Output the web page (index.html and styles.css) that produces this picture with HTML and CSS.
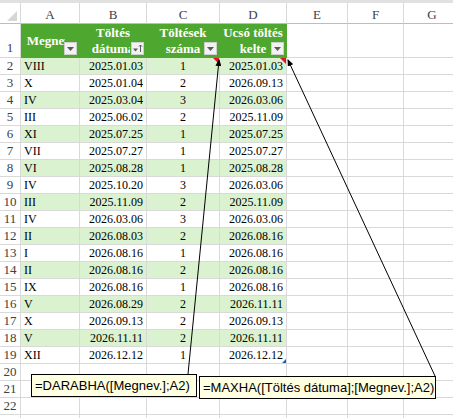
FILE: index.html
```html
<!DOCTYPE html>
<html lang="hu">
<head>
<meta charset="utf-8">
<title>Töltések</title>
<link rel="stylesheet" href="styles.css">
</head>
<body>
<div class="topbar"></div>
<div class="sheet">
  <div class="row hdr">
    <div class="c corner"><span class="tri"></span></div>
    <div class="c ch">A</div><div class="c ch">B</div><div class="c ch">C</div><div class="c ch">D</div><div class="c ch">E</div><div class="c ch">F</div><div class="c ch">G</div>
  </div>
  <div class="row r1">
    <div class="c rh bottom">1</div>
    <div class="c th"><div class="lbl clipA">Megnev.</div><span class="fbtn"><svg width="11" height="11" viewBox="0 0 11 11"><path d="M2 4h7l-3.5 4z" fill="#5a5a5a"/></svg></span></div>
    <div class="c th"><div class="lbl clipB">Töltés<br>dátuma</div><span class="fbtn"><svg width="11" height="11" viewBox="0 0 11 11"><path d="M1 5.5h5l-2.5 3z" fill="#5a5a5a"/><path d="M8.5 2v7M7 3.5l1.5-1.5 1.5 1.5" stroke="#5a5a5a" stroke-width="1" fill="none"/></svg></span></div>
    <div class="c th"><div class="lbl">Töltések<br>száma</div><span class="fbtn"><svg width="11" height="11" viewBox="0 0 11 11"><path d="M2 4h7l-3.5 4z" fill="#5a5a5a"/></svg></span></div>
    <div class="c th"><div class="lbl">Ucsó töltés<br>kelte</div><span class="fbtn"><svg width="11" height="11" viewBox="0 0 11 11"><path d="M2 4h7l-3.5 4z" fill="#5a5a5a"/></svg></span></div>
    <div class="c"></div><div class="c"></div><div class="c"></div>
  </div>
  <div class="row g"><div class="c rh">2</div><div class="c a">VIII</div><div class="c b">2025.01.03</div><div class="c m note-mark">1</div><div class="c b note-mark">2025.01.03</div><div class="c"></div><div class="c"></div><div class="c"></div></div>
  <div class="row"><div class="c rh">3</div><div class="c a">X</div><div class="c b">2025.01.04</div><div class="c m">2</div><div class="c b">2026.09.13</div><div class="c"></div><div class="c"></div><div class="c"></div></div>
  <div class="row g"><div class="c rh">4</div><div class="c a">IV</div><div class="c b">2025.03.04</div><div class="c m">3</div><div class="c b">2026.03.06</div><div class="c"></div><div class="c"></div><div class="c"></div></div>
  <div class="row"><div class="c rh">5</div><div class="c a">III</div><div class="c b">2025.06.02</div><div class="c m">2</div><div class="c b">2025.11.09</div><div class="c"></div><div class="c"></div><div class="c"></div></div>
  <div class="row g"><div class="c rh">6</div><div class="c a">XI</div><div class="c b">2025.07.25</div><div class="c m">1</div><div class="c b">2025.07.25</div><div class="c"></div><div class="c"></div><div class="c"></div></div>
  <div class="row"><div class="c rh">7</div><div class="c a">VII</div><div class="c b">2025.07.27</div><div class="c m">1</div><div class="c b">2025.07.27</div><div class="c"></div><div class="c"></div><div class="c"></div></div>
  <div class="row g"><div class="c rh">8</div><div class="c a">VI</div><div class="c b">2025.08.28</div><div class="c m">1</div><div class="c b">2025.08.28</div><div class="c"></div><div class="c"></div><div class="c"></div></div>
  <div class="row"><div class="c rh">9</div><div class="c a">IV</div><div class="c b">2025.10.20</div><div class="c m">3</div><div class="c b">2026.03.06</div><div class="c"></div><div class="c"></div><div class="c"></div></div>
  <div class="row g"><div class="c rh">10</div><div class="c a">III</div><div class="c b">2025.11.09</div><div class="c m">2</div><div class="c b">2025.11.09</div><div class="c"></div><div class="c"></div><div class="c"></div></div>
  <div class="row"><div class="c rh">11</div><div class="c a">IV</div><div class="c b">2026.03.06</div><div class="c m">3</div><div class="c b">2026.03.06</div><div class="c"></div><div class="c"></div><div class="c"></div></div>
  <div class="row g"><div class="c rh">12</div><div class="c a">II</div><div class="c b">2026.08.03</div><div class="c m">2</div><div class="c b">2026.08.16</div><div class="c"></div><div class="c"></div><div class="c"></div></div>
  <div class="row"><div class="c rh">13</div><div class="c a">I</div><div class="c b">2026.08.16</div><div class="c m">1</div><div class="c b">2026.08.16</div><div class="c"></div><div class="c"></div><div class="c"></div></div>
  <div class="row g"><div class="c rh">14</div><div class="c a">II</div><div class="c b">2026.08.16</div><div class="c m">2</div><div class="c b">2026.08.16</div><div class="c"></div><div class="c"></div><div class="c"></div></div>
  <div class="row"><div class="c rh">15</div><div class="c a">IX</div><div class="c b">2026.08.16</div><div class="c m">1</div><div class="c b">2026.08.16</div><div class="c"></div><div class="c"></div><div class="c"></div></div>
  <div class="row g"><div class="c rh">16</div><div class="c a">V</div><div class="c b">2026.08.29</div><div class="c m">2</div><div class="c b">2026.11.11</div><div class="c"></div><div class="c"></div><div class="c"></div></div>
  <div class="row"><div class="c rh">17</div><div class="c a">X</div><div class="c b">2026.09.13</div><div class="c m">2</div><div class="c b">2026.09.13</div><div class="c"></div><div class="c"></div><div class="c"></div></div>
  <div class="row g"><div class="c rh">18</div><div class="c a">V</div><div class="c b">2026.11.11</div><div class="c m">2</div><div class="c b">2026.11.11</div><div class="c"></div><div class="c"></div><div class="c"></div></div>
  <div class="row"><div class="c rh">19</div><div class="c a">XII</div><div class="c b">2026.12.12</div><div class="c m">1</div><div class="c b resize">2026.12.12</div><div class="c"></div><div class="c"></div><div class="c"></div></div>
  <div class="row"><div class="c rh">20</div><div class="c"></div><div class="c"></div><div class="c"></div><div class="c"></div><div class="c"></div><div class="c"></div><div class="c"></div></div>
  <div class="row"><div class="c rh">21</div><div class="c"></div><div class="c"></div><div class="c"></div><div class="c"></div><div class="c"></div><div class="c"></div><div class="c"></div></div>
  <div class="row"><div class="c rh">22</div><div class="c"></div><div class="c"></div><div class="c"></div><div class="c"></div><div class="c"></div><div class="c"></div><div class="c"></div></div>
  <div class="row"><div class="c rh"></div><div class="c"></div><div class="c"></div><div class="c"></div><div class="c"></div><div class="c"></div><div class="c"></div><div class="c"></div></div>
</div>

<svg class="arrows" width="453" height="418" viewBox="0 0 453 418">
  <defs>
    <marker id="ah" markerWidth="7" markerHeight="6" refX="6" refY="3" orient="auto" markerUnits="userSpaceOnUse">
      <path d="M0,0 L7,3 L0,6 z" fill="#000"/>
    </marker>
  </defs>
  <line x1="188" y1="374" x2="219" y2="60" stroke="#000" stroke-width="1" marker-end="url(#ah)"/>
  <line x1="435" y1="376" x2="288" y2="60" stroke="#000" stroke-width="1" marker-end="url(#ah)"/>
</svg>

<div class="comment n1">=DARABHA([Megnev.];A2)</div>
<div class="comment n2">=MAXHA([Töltés dátuma];[Megnev.];A2)</div>
</body>
</html>
```

FILE: styles.css
```css
* { box-sizing: border-box; }

html, body {
  margin: 0;
  padding: 0;
}

body {
  width: 453px;
  height: 418px;
  overflow: hidden;
  position: relative;
  background: #fff;
  font-family: "Liberation Serif", "Times New Roman", serif;
  color: #000;
}

.topbar {
  height: 3px;
  background: #e1e1e1;
}

.sheet {
  display: flex;
  flex-direction: column;
}

.row {
  display: grid;
  grid-template-columns: 21px 59px 67px 73px 67px 61px 56px 57px;
  height: 17px;
}

.row.hdr { height: 21px; }
.row.r1 { height: 34px; }

.c {
  position: relative;
  border-right: 1px solid #d9d9d9;
  border-bottom: 1px solid #d9d9d9;
  font-size: 12px;
  line-height: 16px;
  padding: 0 3px;
  white-space: nowrap;
  overflow: hidden;
}

.row.g .c:not(.rh):nth-child(-n+5) {
  background: #daf2d0;
}

.corner {
  display: flex;
  align-items: flex-end;
  justify-content: flex-end;
  padding: 0 3px 2px 0;
  border-bottom-color: #bdbdbd;
}

.tri {
  width: 10px;
  height: 10px;
  background: #d6d6d6;
  clip-path: polygon(100% 0, 100% 100%, 0 100%);
}

.ch {
  color: #404040;
  font-size: 13px;
  line-height: 19px;
  padding-top: 2px;
  text-align: center;
  border-bottom-color: #bdbdbd;
}

.rh {
  color: #404040;
  font-size: 13px;
  text-align: center;
  padding: 0;
}

.rh.bottom {
  display: flex;
  align-items: flex-end;
  justify-content: center;
  padding-bottom: 1px;
}

.th {
  background: #4ea72e;
  color: #fff;
  font-weight: bold;
  font-size: 13px;
  line-height: 16px;
  display: flex;
  align-items: center;
  justify-content: center;
  text-align: center;
  border-right-color: #4ea72e;
  border-bottom-color: #4ea72e;
  padding: 0;
}

.lbl {
  width: 100%;
  text-align: center;
}

.clipA { clip-path: inset(0 14px 0 0); }
.clipB { clip-path: inset(0 16px 0 0); }

.fbtn {
  position: absolute;
  right: 2px;
  bottom: 2px;
  width: 13px;
  height: 13px;
  background: #f2f2f2;
  border: 1px solid #cfcfcf;
  display: flex;
  align-items: center;
  justify-content: center;
}

.fbtn svg { display: block; }

.a { text-align: left; }
.b { text-align: right; }
.m { text-align: center; }

.note-mark::after {
  content: "";
  position: absolute;
  right: 0;
  top: 0;
  border-left: 6px solid transparent;
  border-top: 6px solid #e81123;
}

.resize::after {
  content: "";
  position: absolute;
  right: 0;
  bottom: 0;
  border-left: 4px solid transparent;
  border-bottom: 4px solid #1f5fa8;
}

.arrows {
  position: absolute;
  left: 0;
  top: 0;
  pointer-events: none;
}

.comment {
  position: absolute;
  height: 23px;
  background: #ffffe1;
  border: 1px solid #000;
  font-family: "Liberation Sans", Arial, sans-serif;
  font-size: 13px;
  line-height: 21px;
  padding: 0 3px;
  white-space: nowrap;
  color: #000;
}

.n1 { left: 31px; top: 374px; width: 166px; }
.n2 { left: 199px; top: 376px; width: 237px; }
```
